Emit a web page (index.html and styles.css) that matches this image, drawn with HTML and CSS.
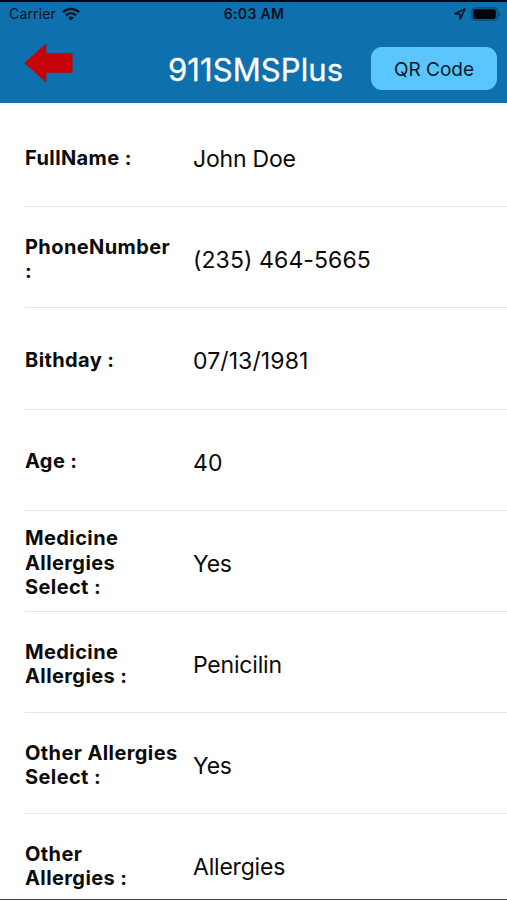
FILE: index.html
```html
<!DOCTYPE html>
<html lang="en">
<head>
<meta charset="utf-8">
<title>911SMSPlus</title>
<link rel="stylesheet" href="styles.css">
</head>
<body>
<div class="screen">
  <header class="header">
    <div class="status">
      <div class="status-left">
        <span class="carrier">Carrier</span>
        <svg class="wifi" width="18" height="14" viewBox="0 0 18 14" fill="none" stroke="#02131f" stroke-width="2.3">
          <path d="M1 5.2C5.6.8 12.4.8 17 5.2"/>
          <path d="M4 8.3c2.9-2.7 7.1-2.7 10 0"/>
          <path d="M9 13.6L6 10.7c1.8-1.6 4.2-1.6 6 0z" fill="#02131f" stroke="none"/>
        </svg>
      </div>
      <span class="time">6:03 AM</span>
      <div class="status-right">
        <svg width="12" height="12" viewBox="0 0 12 12" fill="none" stroke="#02131f" stroke-width="1.5" stroke-linejoin="round">
          <path d="M11 1L1 5.7l4.8.5.5 4.8z"/>
        </svg>
        <svg width="30" height="14" viewBox="0 0 30 14">
          <rect x=".6" y=".6" width="26.4" height="12.8" rx="4" fill="#0b5d92" stroke="#0a4f7d" stroke-width="1"/>
          <rect x="2.2" y="2.3" width="22.5" height="9.6" rx="2.2" fill="#000509"/>
          <path d="M28 4.8c2 .7 2 3.7 0 4.4z" fill="#0a4f7d"/>
        </svg>
      </div>
    </div>
    <div class="nav">
      <svg class="back" width="50" height="40" viewBox="0 0 50 40">
        <path d="M.5 20L22 .8v9.7h26.2v19.2H22v9.6z" fill="#c70509" stroke="#96192d" stroke-width=".7"/>
      </svg>
      <h1 class="title">911SMSPlus</h1>
      <button class="qr">QR Code</button>
    </div>
  </header>
  <main class="list">
    <div class="row"><div class="label">FullName :</div><div class="value">John Doe</div></div>
    <div class="row"><div class="label">PhoneNumber<br>:</div><div class="value numeric">(235) 464-5665</div></div>
    <div class="row"><div class="label">Bithday :</div><div class="value numeric">07/13/1981</div></div>
    <div class="row"><div class="label">Age :</div><div class="value numeric">40</div></div>
    <div class="row"><div class="label">Medicine<br>Allergies<br>Select :</div><div class="value">Yes</div></div>
    <div class="row"><div class="label">Medicine<br>Allergies :</div><div class="value">Penicilin</div></div>
    <div class="row"><div class="label">Other Allergies<br>Select :</div><div class="value">Yes</div></div>
    <div class="row"><div class="label">Other<br>Allergies :</div><div class="value">Allergies</div></div>
  </main>
</div>
</body>
</html>
```

FILE: styles.css
```css
* { box-sizing: border-box; }
body {
  margin: 0;
  background: #fff;
  color: #0b0b0b;
  font-family: Inter, "Liberation Sans", sans-serif;
}
.screen {
  height: 900px;
  overflow: hidden;
  border-bottom: 1px solid #444;
}
.header {
  height: 102.5px;
  background: #0f70ae;
  border-top: 2px solid #00060c;
}
.status {
  display: grid;
  grid-template-columns: 1fr auto 1fr;
  align-items: center;
  height: 23px;
  padding: 0 8px 0 9px;
  color: #02131f;
}
.status-left, .status-right { display: flex; align-items: center; }
.status-left { gap: 6px; }
.status-right { justify-content: flex-end; gap: 5px; margin-right: -2px; }
.carrier { font-size: 14px; letter-spacing: 0.15px; }
.time { font-size: 14px; font-weight: 600; letter-spacing: 0.3px; }
.nav {
  display: flex;
  align-items: flex-start;
  padding: 0 10px 0 24px;
}
.back { margin-top: 18px; }
.title {
  flex: 0 0 203px;
  margin: 25px 0 0 94px;
  color: #fff;
  font-size: 31px;
  line-height: 40px;
  font-weight: 400;
  letter-spacing: 0.1px;
  -webkit-text-stroke: 0.3px #fff;
}
.qr {
  flex: none;
  width: 126px;
  height: 43px;
  margin: 22px 0 0;
  padding: 1px 0 0;
  border: 0;
  border-radius: 11px;
  background: #5bc6fe;
  color: #071c29;
  font: 400 19px Inter, "Liberation Sans", sans-serif;
}
.list { padding: 3.5px 0 0 25px; }
.row {
  display: grid;
  grid-template-columns: 168px 1fr;
  align-items: center;
  height: 101.2px;
  border-bottom: 1px solid #e6e6e6;
}
.row:last-child { border-bottom-color: transparent; }
.label {
  padding-top: 4px;
  font-size: 20px;
  line-height: 24.5px;
  font-weight: 700;
  letter-spacing: 0.4px;
  white-space: nowrap;
}
.value {
  padding-top: 6px;
  font-size: 23px;
  line-height: 28px;
  letter-spacing: -0.2px;
  white-space: nowrap;
}
.numeric { letter-spacing: 0.1px; }
```
